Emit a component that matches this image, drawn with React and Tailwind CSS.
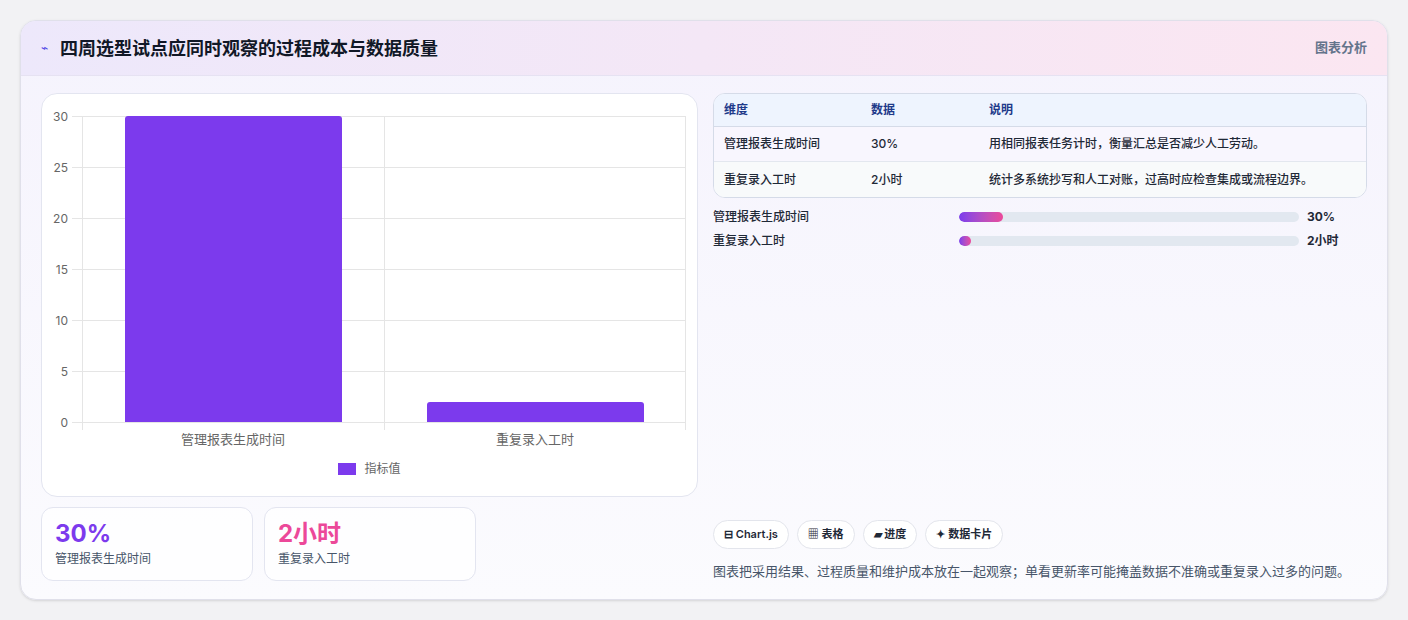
const ROWS = [
  { name: '管理报表生成时间', value: '30%', note: '用相同报表任务计时，衡量汇总是否减少人工劳动。', pct: 13 },
  { name: '重复录入工时', value: '2小时', note: '统计多系统抄写和人工对账，过高时应检查集成或流程边界。', pct: 3.5 },
];

const TICKS = [30, 25, 20, 15, 10, 5, 0];

function Chart() {
  return (
    <div className="h-[404px] rounded-2xl border border-[#e3e5f0] bg-white relative">
      <div className="absolute left-[40px] top-[22px] w-[604px] h-[306px]">
        {TICKS.map((t) => (
          <div key={t} className="absolute left-[-10px] right-0 border-t border-[#e5e5e5]" style={{ top: ((30 - t) / 30) * 306 }}>
            <span className="absolute right-[calc(100%+4px)] -top-[9px] text-[12px] text-[#666]">{t}</span>
          </div>
        ))}
        <div className="absolute top-0 bottom-[-8px] left-0 border-l border-[#e5e5e5]" />
        <div className="absolute top-0 bottom-[-8px] left-[302px] border-l border-[#e5e5e5]" />
        <div className="absolute top-0 bottom-[-8px] right-0 border-l border-[#e5e5e5]" />
        <div className="absolute left-[43px] w-[217px] bottom-0 h-[306px] bg-[#7c3aed] rounded-t-[3px]" />
        <div className="absolute left-[345px] w-[217px] bottom-0 h-[20px] bg-[#7c3aed] rounded-t-[3px]" />
        <div className="absolute top-[314px] left-0 w-[302px] text-center text-[13px] text-[#666]">管理报表生成时间</div>
        <div className="absolute top-[314px] left-[302px] w-[302px] text-center text-[13px] text-[#666]">重复录入工时</div>
      </div>
      <div className="absolute top-[366px] left-0 right-0 flex justify-center items-center gap-2 text-[12px] text-[#666]">
        <span className="w-[18px] h-[12px] bg-[#7c3aed]" />
        指标值
      </div>
    </div>
  );
}

export default function App() {
  return (
    <div className="min-h-[620px] bg-[#f2f2f4] px-5 pt-5 pb-5" style={{ fontFamily: 'Inter, "Noto Sans CJK SC", sans-serif' }}>
      <div className="h-[580px] rounded-2xl border border-[#e0e0ea] bg-gradient-to-b from-[#f5f3fd] to-[#fbfbfe] overflow-hidden shadow-sm flex flex-col">
        <div className="h-[55px] shrink-0 flex items-center justify-between px-5 bg-gradient-to-r from-[#ede8fb] to-[#fbe6f1] border-b border-[#e6e2f2]">
          <div className="flex items-center gap-3">
            <span className="text-[#4f46e5] text-[12px]">⌁</span>
            <h1 className="text-[18px] font-bold text-[#111827]">四周选型试点应同时观察的过程成本与数据质量</h1>
          </div>
          <span className="text-[13px] font-semibold text-[#64748b]">图表分析</span>
        </div>
        <div className="flex-1 flex gap-[15px] px-5 pt-[17px] pb-[18px]">
          <div className="w-[657px] flex flex-col gap-[10px]">
            <Chart />
            <div className="flex gap-[11px]">
              <div className="w-[212px] h-[74px] rounded-xl border border-[#e3e5f0] bg-white/70 px-[13px] pt-[10px]">
                <div className="text-[24px] font-bold text-[#7c3aed] leading-[32px]">30%</div>
                <div className="text-[12px] text-[#475569]">管理报表生成时间</div>
              </div>
              <div className="w-[212px] h-[74px] rounded-xl border border-[#e3e5f0] bg-white/70 px-[13px] pt-[10px]">
                <div className="text-[24px] font-bold text-[#ec4899] leading-[32px]">2小时</div>
                <div className="text-[12px] text-[#475569]">重复录入工时</div>
              </div>
            </div>
          </div>
          <div className="flex-1 flex flex-col">
            <div className="rounded-xl border border-[#d5dbe8] overflow-hidden text-[12px] bg-white">
              <div className="flex h-[33px] items-center bg-[#eef4fe] border-b border-[#d5dbe8] font-semibold text-[#1e3a8a]">
                <div className="w-[157px] pl-[10px]">维度</div>
                <div className="w-[118px]">数据</div>
                <div>说明</div>
              </div>
              {ROWS.map((r, i) => (
                <div key={r.name} className={`flex h-[35px] items-center text-[#1f2937] font-medium ${i === 0 ? 'bg-[#f8f6fe] border-b border-[#e3e7ef]' : 'bg-[#f8fafb]'}`}>
                  <div className="w-[157px] pl-[10px]">{r.name}</div>
                  <div className="w-[118px]">{r.value}</div>
                  <div>{r.note}</div>
                </div>
              ))}
            </div>
            <div className="mt-[12px] flex flex-col gap-[10px]">
              {ROWS.map((r) => (
                <div key={r.name} className="flex items-center h-[14px] text-[12px] font-medium text-[#1f2937]">
                  <div className="w-[246px]">{r.name}</div>
                  <div className="w-[340px] h-[10px] rounded-full bg-[#e2e8f0] overflow-hidden">
                    <div className="h-full rounded-full bg-gradient-to-r from-[#7c3aed] to-[#ec4899]" style={{ width: r.pct + '%' }} />
                  </div>
                  <div className="ml-[8px] font-bold">{r.value}</div>
                </div>
              ))}
            </div>
            <div className="mt-auto flex gap-2 text-[11px] font-semibold text-[#1f2937]">
              {['⊟ Chart.js', '▦ 表格', '▰ 进度', '✦ 数据卡片'].map((t) => (
                <span key={t} className="h-[29px] px-[10px] flex items-center rounded-full border border-[#e3e5ec] bg-white">{t}</span>
              ))}
            </div>
            <p className="mt-[13px] text-[13px] text-[#475569]">图表把采用结果、过程质量和维护成本放在一起观察；单看更新率可能掩盖数据不准确或重复录入过多的问题。</p>
          </div>
        </div>
      </div>
    </div>
  );
}
